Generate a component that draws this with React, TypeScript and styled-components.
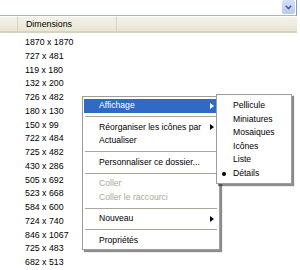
import React from "react";
import styled, {createGlobalStyle} from "styled-components";

const GlobalStyle = createGlobalStyle`
  body {
    margin: 0;
    background: #ffffff;
    font-family: "Liberation Sans", Arial, sans-serif;
    font-size: 8.8px;
    color: #000000;
  }
`;

const Window = styled.div`
  position: relative;
  width: 300px;
  height: 270px;
  overflow: hidden;
  background: #ffffff;
`;

const AddressBar = styled.div`
  display: flex;
  height: 16px;
  padding-right: 3px;
  background: #ffffff;
`;

const Combo = styled.div`
  flex: 1;
  display: flex;
  justify-content: flex-end;
  background: #ffffff;
  border-bottom: 1px solid #a5b7cf;
  border-right: 1px solid #7f9db9;
`;

const DropButton = styled.div`
  width: 13px;
  height: 14px;
  margin: 0 1px 1px 0;
  display: flex;
  align-items: center;
  justify-content: center;
  border-radius: 2px;
  background: linear-gradient(#d2defb, #b6c9f5);
`;

const Header = styled.div`
  display: flex;
  height: 14px;
  margin-top: 1px;
  margin-right: 3px;
  background: linear-gradient(#f4f2e8, #e9e6d4);
  border-bottom: 2px solid #d6d2c2;
`;

const HeaderCell = styled.div<{ $width?: number }>`
  ${p => p.$width ? `width: ${p.$width}px;` : "flex: 1;"}
  display: flex;
  align-items: center;
  padding-left: ${p => p.$width && p.$width > 40 ? 8 : 0}px;
  box-sizing: border-box;
  border-right: ${p => p.$width ? "1px solid #d8d4c4" : "none"};
  color: #000000;
`;

const List = styled.div`
  padding-top: 3px;
`;

const Row = styled.div`
  height: 13.75px;
  line-height: 13.75px;
  padding-left: 25px;
  white-space: nowrap;
`;

const Menu = styled.div<{ $left: number; $top: number; $width: number; $padTop: number }>`
  position: absolute;
  left: ${p => p.$left}px;
  top: ${p => p.$top}px;
  width: ${p => p.$width}px;
  box-sizing: border-box;
  padding: ${p => p.$padTop}px 1px 2px 1px;
  background: #ffffff;
  border: 1px solid #9d9d9d;
  box-shadow: 2px 2px 1px rgba(0, 0, 0, 0.45);
  font-size: 8.6px;
`;

const Item = styled.div<{ $active?: boolean; $disabled?: boolean; $indent: number; $height: number }>`
  position: relative;
  height: ${p => p.$height}px;
  line-height: ${p => p.$height}px;
  padding-left: ${p => p.$indent}px;
  white-space: nowrap;
  background: ${p => p.$active ? "#316ac5" : "transparent"};
  color: ${p => p.$active ? "#ffffff" : p.$disabled ? "#aca899" : "#000000"};
`;

const Arrow = styled.span<{ $light?: boolean }>`
  position: absolute;
  right: 4px;
  top: 50%;
  margin-top: -3px;
  width: 0;
  height: 0;
  border-top: 3px solid transparent;
  border-bottom: 3px solid transparent;
  border-left: 4px solid ${p => p.$light ? "#ffffff" : "#000000"};
`;

const Bullet = styled.span`
  position: absolute;
  left: 4px;
  top: 50%;
  margin-top: -2px;
  width: 4px;
  height: 4px;
  border-radius: 50%;
  background: #000000;
`;

const Separator = styled.div`
  height: 8px;
  display: flex;
  align-items: center;
  padding: 0 1px;

  &::after {
    content: "";
    flex: 1;
    height: 1px;
    background: #aca899;
  }
`;

const dims = [
    "1870 x 1870", "727 x 481", "119 x 180", "132 x 200", "726 x 482", "180 x 130",
    "150 x 99", "722 x 484", "725 x 482", "430 x 286", "505 x 692", "523 x 668",
    "584 x 600", "724 x 740", "846 x 1067", "725 x 483", "682 x 513",
];

const views = ["Pellicule", "Miniatures", "Mosaiques", "Icônes", "Liste", "Détails"];

const App: React.FC = () => {
    return <Window>
        <GlobalStyle/>
        <AddressBar>
            <Combo>
                <DropButton>
                    <svg width="7" height="5" viewBox="0 0 7 5">
                        <path d="M0.8 0.8 L3.5 3.5 L6.2 0.8" fill="none" stroke="#4d6185" strokeWidth="1.6"/>
                    </svg>
                </DropButton>
            </Combo>
        </AddressBar>
        <Header>
            <HeaderCell $width={18}/>
            <HeaderCell $width={99}>Dimensions</HeaderCell>
            <HeaderCell/>
        </Header>
        <List>
            {dims.map((d, i) => <Row key={i}>{d}</Row>)}
        </List>

        <Menu $left={82} $top={96} $width={138} $padTop={2}>
            <Item $active $indent={15} $height={13.5}>Affichage<Arrow $light/></Item>
            <Separator/>
            <Item $indent={15} $height={13.5}>Réorganiser les icônes par<Arrow/></Item>
            <Item $indent={15} $height={13.5}>Actualiser</Item>
            <Separator/>
            <Item $indent={15} $height={13.5}>Personnaliser ce dossier...</Item>
            <Separator/>
            <Item $disabled $indent={15} $height={13.5}>Coller</Item>
            <Item $disabled $indent={15} $height={13.5}>Coller le raccourci</Item>
            <Separator/>
            <Item $indent={15} $height={13.5}>Nouveau<Arrow/></Item>
            <Separator/>
            <Item $indent={15} $height={13.5}>Propriétés</Item>
        </Menu>

        <Menu $left={216} $top={94} $width={76} $padTop={4}>
            {views.map(v => <Item key={v} $indent={15} $height={13.6}>
                {v === "Détails" && <Bullet/>}
                {v}
            </Item>)}
        </Menu>
    </Window>;
};

export default App;
